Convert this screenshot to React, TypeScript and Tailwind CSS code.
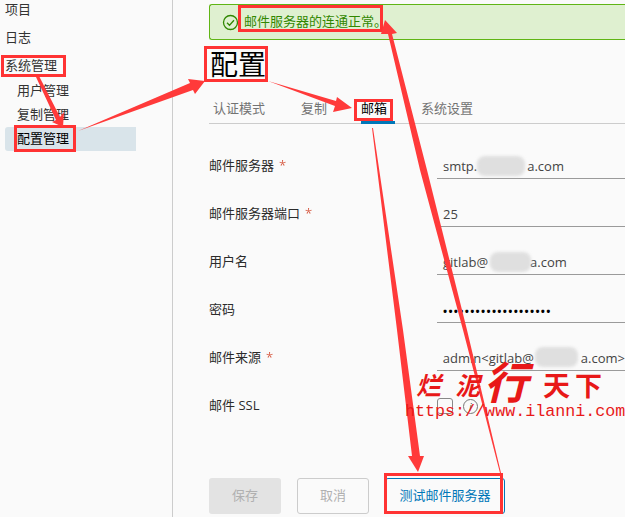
import type { ReactNode } from "react";

function Blur({ className }: { className: string }) {
  return <span className={`absolute h-[20px] rounded-[8px] bg-[#dfdfdf] blur-[1.5px] ${className}`} />;
}

function Row({ label, req, value, children }: { label: string; req?: boolean; value?: string; children?: ReactNode }) {
  return (
    <div className="flex h-[48px] items-start">
      <div className="w-[228px] pt-[5px] text-[13px] leading-[18px] text-[#2b2b2b]">
        {label}
        {req && <span className="ml-[5px] text-[#c92100] opacity-70">*</span>}
      </div>
      <div className="relative h-[28px] flex-1 border-b border-[#9a9a9a] pl-[6px] pt-[6px] text-[13px] leading-[18px] text-[#444] whitespace-nowrap">
        {value}
        {children}
      </div>
    </div>
  );
}

function Box({ c }: { c: string }) {
  return <div className={`absolute border-[3px] border-[#ff3333] ${c}`} />;
}

export default function App() {
  return (
    <div className="relative flex h-[517px] w-[625px] overflow-hidden bg-[#fafafa] [font-family:'Open_Sans','Noto_Sans_CJK_SC',sans-serif]">
      <aside className="w-[173px] shrink-0 border-r border-[#ccc] pl-[5px] pt-[1px] text-[13px] text-[#333]">
        <div className="flex h-[18px] items-center">项目</div>
        <div className="mt-[10px] flex h-[18px] items-center">日志</div>
        <div className="mt-[10px] flex h-[18px] items-center">系统管理</div>
        <div className="mt-[4px] flex h-[24px] items-center pl-[12px]">用户管理</div>
        <div className="flex h-[24px] items-center pl-[12px]">复制管理</div>
        <div className="flex h-[24px] w-[131px] items-center rounded-l-[3px] bg-[#d9e4ea] pl-[12px] text-black">配置管理</div>
      </aside>
      <main className="min-w-0 flex-1 pl-[36px] pt-[4px]">
        <div className="flex h-[36px] items-center gap-[5px] rounded-l-[3px] border border-r-0 border-[#60b515] bg-[#dff0d0] pl-[12px] text-[13px] text-[#318700]">
          <svg width="17" height="17" viewBox="0 0 17 17" fill="none" stroke="#318700" strokeWidth="1.3">
            <circle cx="8.5" cy="8.5" r="7" />
            <path d="M5 8.7l2.5 2.5L12 6.2" />
          </svg>
          <span>邮件服务器的连通正常。</span>
        </div>
        <h1 className="mt-[7px] h-[34px] pl-[1px] text-[28px] font-normal leading-[34px] text-black">配置</h1>
        <nav className="mt-[9px] flex h-[34px] border-b border-[#ccc] pl-[4px] text-[13px] text-[#737373]">
          <div className="w-[88px] pt-[9px]">认证模式</div>
          <div className="w-[60px] pt-[9px]">复制</div>
          <div className="relative w-[60px] pt-[9px] text-black">
            邮箱
            <span className="absolute bottom-[-1px] left-0 h-[3px] w-[34px] bg-[#0077b8]" />
          </div>
          <div className="pt-[9px]">系统设置</div>
        </nav>
        <div className="mt-[27px]">
          <Row label="邮件服务器" req value="smtp.">
            <span className="ml-[50px]">a.com</span>
            <Blur className="left-[40px] top-[5px] w-[48px]" />
          </Row>
          <Row label="邮件服务器端口" req value="25" />
          <Row label="用户名" value="gitlab@">
            <span className="ml-[42px]">a.com</span>
            <Blur className="left-[53px] top-[5px] w-[41px]" />
          </Row>
          <Row label="密码">
            <span className="text-[11px] font-bold tracking-[1.3px] text-black">••••••••••••••••••••</span>
          </Row>
          <Row label="邮件来源" req value="admin<gitlab@">
            <span className="ml-[47px]">a.com&gt;</span>
            <Blur className="left-[98px] top-[4px] w-[43px]" />
          </Row>
          <div className="flex h-[48px] items-start">
            <div className="w-[228px] pt-[5px] text-[13px] leading-[18px] text-[#2b2b2b]">邮件 SSL</div>
            <div className="flex items-center gap-[10px] pt-[7px]">
              <span className="block h-[16px] w-[16px] shrink-0 rounded-[3px] border border-[#888]" />
              <span className="flex h-[15px] w-[15px] items-center justify-center rounded-full border border-[#777] text-[11px] italic leading-none text-[#555]">i</span>
            </div>
          </div>
        </div>
        <div className="mt-[39px] flex gap-[16px] text-[13px]">
          <button className="h-[36px] w-[72px] rounded-[3px] bg-[#e3e3e3] text-[#b0b0b0]">保存</button>
          <button className="h-[36px] w-[72px] rounded-[3px] border border-[#ccc] text-[#b0b0b0]">取消</button>
          <button className="h-[36px] w-[120px] rounded-[3px] border border-[#0077b8] text-[#0077b8]">测试邮件服务器</button>
        </div>
      </main>

      <Box c="left-[1px] top-[55px] h-[22px] w-[65px]" />
      <Box c="left-[14px] top-[125px] h-[27px] w-[62px]" />
      <Box c="left-[204px] top-[46px] h-[36px] w-[64px]" />
      <Box c="left-[238px] top-[5px] h-[27px] w-[145px]" />
      <Box c="left-[354px] top-[99px] h-[22px] w-[39px]" />
      <Box c="left-[384px] top-[473px] h-[41px] w-[119px]" />

      <svg className="pointer-events-none absolute left-0 top-0" width="625" height="517" fill="#ff3a3a">
        <polygon points="36,77 39,76 60,117 64,112 63,127 52,122 56,120" />
        <polygon points="78,131 190,83 188,79 205,81 195,94 193,90" />
        <polygon points="268,81 336,101 337,97 352,108 333,112 335,106" />
        <polygon points="385,20 397,33 392,34 427,170 467,330 501,473 500,473 463,330 420,170 388,34 381,34" />
        <polygon points="372,128 373,128 403,330 420,456 424,456 418,472 408,456 412,456 397,330" />
      </svg>

      <div className="absolute left-[416px] top-[358px] flex items-end font-bold leading-none text-[#e81818] [font-family:'Noto_Sans_CJK_SC',sans-serif]">
        <span className="mb-[5px] text-[25px] italic tracking-[14px]">烂泥</span>
        <span className="ml-[-10px] text-[44px] italic leading-[44px]">行</span>
        <span className="mb-[4px] ml-[15px] text-[27px] tracking-[5px]">天下</span>
      </div>
      <div className="absolute left-[405px] top-[402px] whitespace-nowrap text-[16.7px] leading-[20px] text-[#e81818] [font-family:'Liberation_Mono',monospace]">https://www.ilanni.com</div>
    </div>
  );
}
